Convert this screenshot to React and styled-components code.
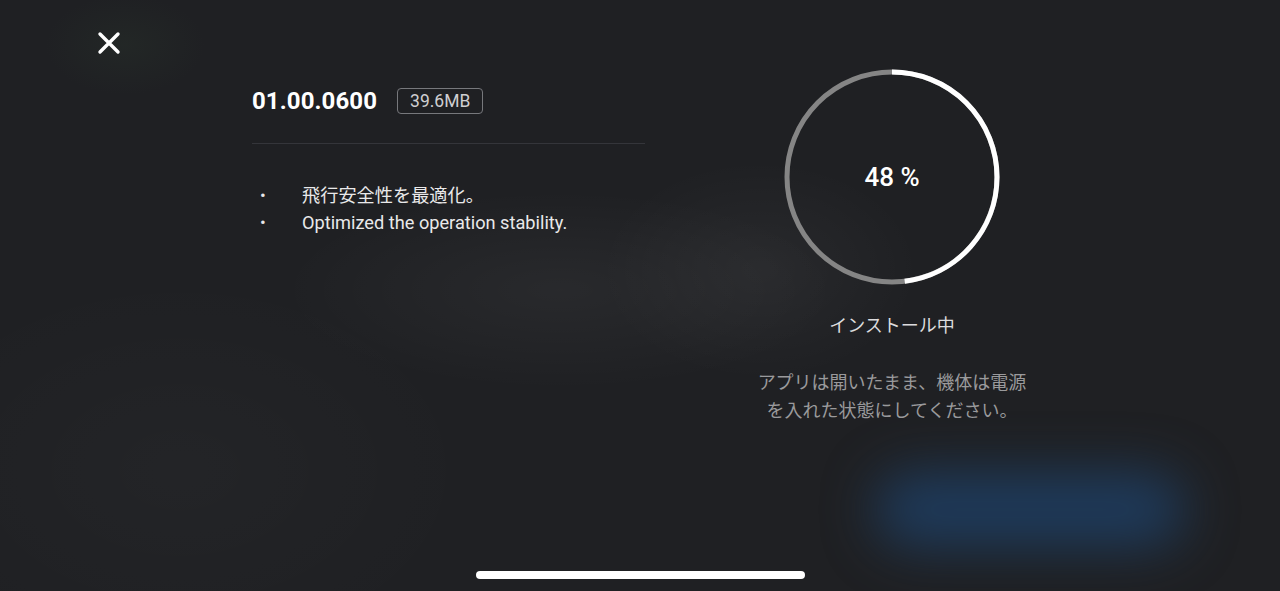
import React from 'react'
import styled, { createGlobalStyle } from 'styled-components'

const COLORS = {
  BG: '#1f2023',
  WHITE: '#ffffff',
  TEXT: '#e9e9ea',
  TEXT_DIM: '#9a9a9c',
  RING_TRACK: '#858585',
  DIVIDER: '#34353a',
  BADGE_BORDER: '#77787c'
}

const SANS = `Roboto, "Noto Sans CJK JP", "Noto Sans", sans-serif`

const GlobalStyle = createGlobalStyle`
  html, body, #root {
    height: 100%;
    margin: 0;
  }
  body {
    background: ${COLORS.BG};
    font-family: ${SANS};
    overflow: hidden;
  }
`

// ---------------------------------------------------------------------------//
// PAGE
// ---------------------------------------------------------------------------//

const Page = styled.div`
  background:
    radial-gradient(ellipse 80px 50px at 125px 45px, rgba(60, 90, 60, 0.12), transparent),
    radial-gradient(ellipse 280px 100px at 560px 290px, rgba(255, 255, 255, 0.045), transparent),
    radial-gradient(ellipse 160px 110px at 760px 270px, rgba(255, 255, 255, 0.045), transparent),
    radial-gradient(ellipse 300px 200px at 180px 470px, rgba(255, 255, 255, 0.02), transparent),
    ${COLORS.BG};
  display: flex;
  height: 591px;
  overflow: hidden;
  position: relative;
  width: 1280px;
`

const SideColumn = styled.div`
  box-sizing: border-box;
  padding: 31px 0 0 97px;
  width: 252px;
`

const CloseButton = styled.button`
  background: none;
  border: 0;
  cursor: pointer;
  display: block;
  height: 24px;
  padding: 0;
  width: 24px;
`

const NotesColumn = styled.div`
  box-sizing: border-box;
  padding-top: 88px;
  width: 393px;
`

const TitleRow = styled.div`
  align-items: center;
  display: flex;
  gap: 20px;
  height: 25px;
`

const Version = styled.h1`
  color: ${COLORS.WHITE};
  font-size: 24px;
  font-weight: 700;
  letter-spacing: 0.1px;
  margin: 0;
`

const SizeBadge = styled.span`
  border: 1px solid ${COLORS.BADGE_BORDER};
  border-radius: 4px;
  box-sizing: border-box;
  color: #cfcfd1;
  font-size: 17.5px;
  height: 26px;
  line-height: 24px;
  padding: 0 12px 0 12px;
`

const Divider = styled.hr`
  border: 0;
  border-top: 1px solid ${COLORS.DIVIDER};
  margin: 30px 0 0;
`

const NotesList = styled.ul`
  list-style: none;
  margin: 38px 0 0;
  padding: 0;
`

const NoteItem = styled.li`
  color: ${COLORS.TEXT};
  display: flex;
  font-size: 18.2px;
  line-height: 27px;
  &::before {
    content: '•';
    font-size: 17px;
    padding-left: 8px;
    width: 42px;
  }
`

// ---------------------------------------------------------------------------//
// PROGRESS
// ---------------------------------------------------------------------------//

const ProgressColumn = styled.div`
  align-items: center;
  display: flex;
  flex-direction: column;
  margin-left: 97px;
  padding-top: 67px;
  width: 300px;
`

const RingWrap = styled.div`
  height: 220px;
  position: relative;
  width: 220px;
`

const RingLabel = styled.div`
  align-items: center;
  color: ${COLORS.WHITE};
  display: flex;
  font-size: 26px;
  font-weight: 500;
  inset: 0;
  justify-content: center;
  position: absolute;
`

const Status = styled.div`
  color: #dcdcde;
  font-size: 18px;
  margin-top: 24px;
`

const Hint = styled.p`
  color: ${COLORS.TEXT_DIM};
  font-size: 18px;
  line-height: 28px;
  margin: 32px 0 0;
  text-align: center;
  width: 280px;
`

const GlowButton = styled.div`
  background: rgba(30, 70, 115, 0.7);
  border-radius: 40px;
  filter: blur(26px);
  height: 75px;
  left: 875px;
  position: absolute;
  top: 472px;
  width: 310px;
`

const HomeIndicator = styled.div`
  background: ${COLORS.WHITE};
  border-radius: 4px;
  bottom: 12px;
  height: 8px;
  left: 476px;
  position: absolute;
  width: 329px;
`

const ProgressRing = ({ percent }) => {
  const r = 105
  const c = 2 * Math.PI * r
  return (
    <svg width="220" height="220" viewBox="0 0 220 220">
      <circle cx="110" cy="110" r={r} fill="none" stroke={COLORS.RING_TRACK} strokeWidth="5" />
      <circle
        cx="110"
        cy="110"
        r={r}
        fill="none"
        stroke={COLORS.WHITE}
        strokeWidth="5"
        strokeDasharray={`${(c * percent) / 100} ${c}`}
        transform="rotate(-90 110 110)"
      />
    </svg>
  )
}

export default function App () {
  const percent = 48
  return (
    <>
      <GlobalStyle />
      <Page>
        <SideColumn>
          <CloseButton aria-label="close">
            <svg width="24" height="24" viewBox="0 0 24 24">
              <path d="M3 3 L21 21 M21 3 L3 21" stroke="#fff" strokeWidth="3.4" strokeLinecap="round" />
            </svg>
          </CloseButton>
        </SideColumn>

        <NotesColumn>
          <TitleRow>
            <Version>01.00.0600</Version>
            <SizeBadge>39.6MB</SizeBadge>
          </TitleRow>
          <Divider />
          <NotesList>
            <NoteItem>飛行安全性を最適化。</NoteItem>
            <NoteItem>Optimized the operation stability.</NoteItem>
          </NotesList>
        </NotesColumn>

        <ProgressColumn>
          <RingWrap>
            <ProgressRing percent={percent} />
            <RingLabel>{percent} %</RingLabel>
          </RingWrap>
          <Status>インストール中</Status>
          <Hint>アプリは開いたまま、機体は電源を入れた状態にしてください。</Hint>
        </ProgressColumn>

        <GlowButton />
        <HomeIndicator />
      </Page>
    </>
  )
}
